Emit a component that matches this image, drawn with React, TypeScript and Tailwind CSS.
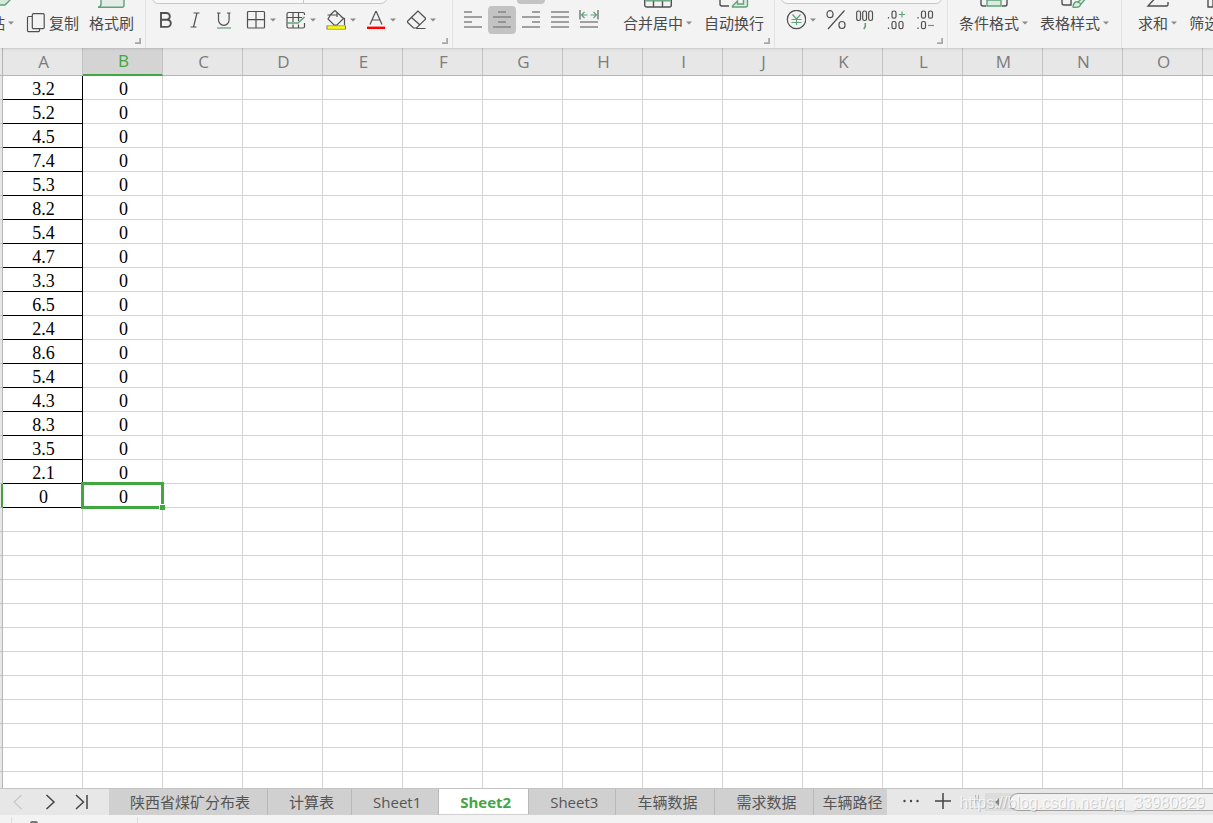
import { ReactNode } from 'react'
import clsx from 'clsx'

const COLUMNS = ['A', 'B', 'C', 'D', 'E', 'F', 'G', 'H', 'I', 'J', 'K', 'L', 'M', 'N', 'O', 'P']
const VALUES = [
  '3.2', '5.2', '4.5', '7.4', '5.3', '8.2', '5.4', '4.7', '3.3',
  '6.5', '2.4', '8.6', '5.4', '4.3', '8.3', '3.5', '2.1', '0',
]
const ROW_COUNT = 30
const ACTIVE_ROW = VALUES.length - 1

const SHEETS = ['陕西省煤矿分布表', '计算表', 'Sheet1', 'Sheet2', 'Sheet3', '车辆数据', '需求数据', '车辆路径']

const GREEN = '#5fa27a'
const DARK = '#505050'

function Arrow() {
  return (
    <svg className="w-1.5 h-1 shrink-0" viewBox="0 0 6 4" fill="#8a8a8a">
      <path d="M0 .5h6L3 3.5z" />
    </svg>
  )
}

function Icon({ children }: { children: ReactNode }) {
  return (
    <svg className="size-5 shrink-0" viewBox="0 0 20 20" fill="none" stroke={DARK} strokeWidth="1.2">
      {children}
    </svg>
  )
}

function Group({ children, className, launcher }: { children: ReactNode; className?: string; launcher?: boolean }) {
  return (
    <div className={clsx('relative flex shrink-0 items-end border-r border-[#e2e2e2] pb-3.5', className)}>
      {children}
      {launcher && (
        <svg className="absolute bottom-1 right-1 size-1.5" viewBox="0 0 6 6" fill="none" stroke="#a8a8a8" strokeWidth="1.8">
          <path d="M5.100 0v5.100H0" />
        </svg>
      )}
    </div>
  )
}

function BigButton({ label, icon, arrow }: { label: string; icon?: ReactNode; arrow?: boolean }) {
  return (
    <button className="flex shrink-0 flex-col items-center gap-1">
      <svg className="h-7 w-8" viewBox="0 0 32 28" fill="none" stroke={DARK} strokeWidth="1.4">
        {icon}
      </svg>
      <span className="flex h-[22px] items-center gap-[3px] whitespace-nowrap">
        {label}
        {arrow && <Arrow />}
      </span>
    </button>
  )
}

function Tool({ label, children, arrow }: { label: string; children: ReactNode; arrow?: boolean }) {
  return (
    <button aria-label={label} className="flex h-7 shrink-0 items-center gap-1">
      {children}
      {arrow && <Arrow />}
    </button>
  )
}

function SquareTool({ label, children, active }: { label: string; children: ReactNode; active?: boolean }) {
  return (
    <button
      aria-label={label}
      className={clsx('flex size-7 shrink-0 items-center justify-center rounded', active && 'bg-[#c3c3c3]')}
    >
      {children}
    </button>
  )
}

function AlignIcon({ d }: { d: string }) {
  return (
    <svg className="size-5" viewBox="0 0 20 20" fill="none" stroke="#858585" strokeWidth="1.5">
      <path d={d} />
    </svg>
  )
}

function Ribbon() {
  return (
    <header className="relative z-10 flex h-12 shrink-0 items-stretch overflow-hidden bg-[#f3f3f3] text-[15px] text-[#4a4a4a] shadow-sm">
      <Group launcher className="-ml-[25px] pr-[11px]">
        <BigButton label="粘贴" arrow icon={<path d="M17 25h9l5-5V6H17z" stroke={GREEN} fill="#d5e9dc" />} />
        <button className="ml-3 flex h-[22px] shrink-0 items-center gap-[3px] whitespace-nowrap">
          <Icon>
            <path d="M7.500 .700h9.500a1.200 1.200 0 0 1 1.200 1.200v12.600a1.200 1.200 0 0 1-1.200 1.200H7.500a1.200 1.200 0 0 1-1.200-1.200V1.900A1.200 1.200 0 0 1 7.500 .7z" />
            <path d="M6.300 3.500H2.700A1.200 1.200 0 0 0 1.500 4.700v12.800a1.200 1.200 0 0 0 1.200 1.200h9.600a1.200 1.200 0 0 0 1.200-1.200v-1.800" />
          </Icon>
          复制
        </button>
        <div className="ml-2.5">
          <BigButton label="格式刷" icon={<path d="M5 27.200h21a2 2 0 0 0 2-2V4H5v20q0 3-3 3.200z" stroke={GREEN} fill="#e3ece6" />} />
        </div>
      </Group>

      <Group launcher className="pl-1.5 pr-4">
        <div className="flex flex-col gap-0.5">
          <div className="flex h-8 w-[235px] shrink-0 rounded-md border border-[#c8c8c8] bg-[#f8f8f8]">
            <div className="w-[151px] border-r border-[#c8c8c8]" />
          </div>
          <div className="flex items-center gap-2">
            <div className="flex gap-px">
              <SquareTool label="加粗">
                <Icon>
                  <path d="M5 3h5.500a3.300 3.300 0 0 1 0 6.700H5zM5 9.700h6.200a3.600 3.600 0 0 1 0 7.200H5z" strokeWidth="1.900" />
                </Icon>
              </SquareTool>
              <SquareTool label="倾斜">
                <Icon>
                  <path d="M8.500 3h6M5.500 17h6M12 3L8.500 17" />
                </Icon>
              </SquareTool>
              <SquareTool label="下划线">
                <Icon>
                  <path d="M3 3h3.500M13 3h3.500M4.500 3v7a5.300 5.300 0 0 0 10.600 0V3" />
                  <path d="M3 18h14" stroke={GREEN} />
                </Icon>
              </SquareTool>
            </div>
            <div className="flex gap-2.5">
              <Tool label="边框" arrow>
                <Icon>
                  <rect x="1.500" y="1.500" width="17" height="16.500" rx="1" />
                  <path d="M10 1.500V18M1.500 9.700h17" />
                </Icon>
              </Tool>
              <Tool label="表格" arrow>
                <Icon>
                  <path d="M18.500 5V4a1.500 1.500 0 0 0-1.500-1.500H2.500A1.500 1.500 0 0 0 1 4v12.500A1.500 1.500 0 0 0 2.500 18H17a1.500 1.500 0 0 0 1.500-1.500V13M1 7.500h15M7 2.500V12M12.500 2.500V11M7 14.500V18M12.500 14.500V18" />
                  <path d="M1 13h11l6.500-6" stroke={GREEN} strokeWidth="1.600" />
                </Icon>
              </Tool>
              <Tool label="填充颜色" arrow>
                <Icon>
                  <path d="M1.500 5h9M4 5l5-4.500 8.500 8L11 15H8L2 9l2.500-4M11 2.500V7M14.500 6.500l4 2v6.500" />
                  <path d="M.500 17.500h19.500" stroke="#777" strokeWidth="4" />
                  <path d="M1.500 17.500h17.500" stroke="#ff0" strokeWidth="2.600" />
                </Icon>
              </Tool>
              <Tool label="字体颜色" arrow>
                <Icon>
                  <path d="M4 14.500L9.700 1.500h.6L16 14.500M6 10h8" />
                  <path d="M1 17.800h18" stroke="#f00" strokeWidth="2.400" />
                </Icon>
              </Tool>
              <Tool label="清除" arrow>
                <Icon>
                  <path d="M12 1L2 10.700a1.500 1.500 0 0 0 0 2.100L7.500 18h3L20 8.700zM5.500 7.500l8.500 7.500M10 18.500h9.500" />
                </Icon>
              </Tool>
            </div>
          </div>
        </div>
      </Group>

      <Group launcher className="pl-1.5 pr-2.5">
        <div className="flex flex-col gap-0.5">
          <div className="flex gap-px">
            <SquareTool label="顶端对齐">{null}</SquareTool>
            <SquareTool label="垂直居中">{null}</SquareTool>
            <SquareTool label="底端对齐" active>{null}</SquareTool>
          </div>
          <div className="flex gap-px">
            <SquareTool label="左对齐"><AlignIcon d="M1 2h8M1 7h18M1 12h8M1 17h18" /></SquareTool>
            <SquareTool label="水平居中" active><AlignIcon d="M6 2h8M1 7h18M6 12h8M1 17h18" /></SquareTool>
            <SquareTool label="右对齐"><AlignIcon d="M11 2h8M1 7h18M11 12h8M1 17h18" /></SquareTool>
            <SquareTool label="两端对齐"><AlignIcon d="M1 2h18M1 7h18M1 12h18M1 17h18" /></SquareTool>
            <SquareTool label="分散对齐">
              <svg className="size-5" viewBox="0 0 20 20" fill="none" stroke="#858585" strokeWidth="1.5">
                <path d="M1 12h18M1 17h18" />
                <path d="M1 0v9.500M19 0v9.500" stroke={DARK} strokeWidth="1.100" />
                <path d="M8.500 5h-6M5.500 2l-3 3 3 3M11.500 5h6M14.500 2l3 3-3 3" stroke={GREEN} strokeWidth="1.200" />
              </svg>
            </SquareTool>
          </div>
        </div>
        <div className="ml-5 flex gap-3">
          <BigButton
            label="合并居中"
            arrow
            icon={
              <>
                <path d="M2.700 6v19a2 2 0 0 0 2 2h22.600a2 2 0 0 0 2-2V6M11.500 21v6M20.500 21v6" />
                <path d="M3.500 20.800h25" stroke={GREEN} />
              </>
            }
          />
          <BigButton
            label="自动换行"
            icon={
              <>
                <path d="M2 4v20a2 2 0 0 0 2 2h7" />
                <path d="M14.500 26l5-5v3h6V14h4v11a2 2 0 0 1-2 2h-13z" stroke={GREEN} fill="#dcebe1" />
              </>
            }
          />
        </div>
      </Group>

      <Group launcher className="pl-1.5 pr-[5px]">
        <div className="flex flex-col gap-0.5">
          <div className="h-8 w-[161px] shrink-0 rounded-md border border-[#c8c8c8] bg-[#f8f8f8]" />
          <div className="flex gap-2.5 pl-[5px]">
            <Tool label="货币" arrow>
              <Icon>
                <circle cx="10.500" cy="9.500" r="9.200" />
                <path d="M6.500 4.500l4 4.500 4-4.500M5.500 9.500h10M5.500 12.500h10M10.500 9v6" stroke={GREEN} />
              </Icon>
            </Tool>
            <Tool label="百分比">
              <Icon>
                <rect x="1" y=".7" width="6" height="7" rx="3" />
                <rect x="13" y="11.500" width="6" height="7" rx="3" />
                <path d="M18.500 .5L2 19" />
              </Icon>
            </Tool>
            <Tool label="千位分隔">
              <Icon>
                <rect x=".7" y="1" width="3.800" height="9.500" rx="1.700" />
                <rect x="6.700" y="1" width="3.800" height="9.500" rx="1.700" />
                <rect x="12.700" y="1" width="3.800" height="9.500" rx="1.700" />
                <path d="M9.300 13v3.500l-1.500 2.500" stroke={GREEN} strokeWidth="1.600" />
              </Icon>
            </Tool>
            <Tool label="增加小数">
              <Icon>
                <path d="M2.500 7v1.500M2.500 17.500V19" />
                <rect x="6" y="1" width="4" height="7.200" rx="1.800" />
                <rect x="6" y="11.500" width="4" height="7.200" rx="1.800" />
                <rect x="13" y="11.500" width="4" height="7.200" rx="1.800" />
                <path d="M13 4.500h6M16 1.500v6" stroke={GREEN} />
              </Icon>
            </Tool>
            <Tool label="减少小数">
              <Icon>
                <path d="M2 7v1.500M2 17.500V19" />
                <rect x="5.500" y="1" width="4" height="7.200" rx="1.800" />
                <rect x="12.500" y="1" width="4" height="7.200" rx="1.800" />
                <rect x="5.500" y="11.500" width="4" height="7.200" rx="1.800" />
                <path d="M12 15.500h6" stroke={GREEN} />
              </Icon>
            </Tool>
          </div>
        </div>
      </Group>

      <Group className="gap-3 pl-[11px] pr-3">
        <BigButton
          label="条件格式"
          arrow
          icon={
            <>
              <path d="M8 8H3v16a2 2 0 0 0 2 2h3M24 8h5v16a2 2 0 0 1-2 2h-3" />
              <path d="M9 8h14v18H9zM9 20h14" stroke={GREEN} fill="#dcebe1" />
            </>
          }
        />
        <BigButton
          label="表格样式"
          arrow
          icon={
            <>
              <path d="M3 6v17a2 2 0 0 0 2 2h7V10" />
              <path d="M27 15l-8 7c-2-1-5 1-5 5 4 1 7 0 8-3l7-8M19 22l3 2" stroke={GREEN} fill="#dcebe1" />
            </>
          }
        />
      </Group>

      <div className="flex shrink-0 items-end gap-3 pb-3.5 pl-4">
        <BigButton label="求和" arrow icon={<path d="M26 4H6l10 11L6 26h18.500a1.500 1.500 0 0 0 1.500-1.500V22" />} />
        <BigButton label="筛选" arrow icon={<path d="M2 2h28L20 15v12h-5V15z" />} />
      </div>
    </header>
  )
}

function Sheet() {
  return (
    <main className="min-h-0 flex-1 overflow-hidden bg-white">
      <table className="w-[1283px] table-fixed border-separate border-spacing-0 text-center">
        <colgroup>
          <col className="w-[3px]" />
          {COLUMNS.map((c) => (
            <col key={c} className="w-20" />
          ))}
        </colgroup>
        <thead>
          <tr className="h-7 bg-[#e7e7e7] text-[17px] leading-6 text-[#7c7c7c]">
            <th className="border-b border-r border-[#b5b5b5] p-0" />
            {COLUMNS.map((c) => (
              <th
                key={c}
                className={clsx(
                  'py-0 pl-0.5 pr-0 font-normal',
                  c === 'B'
                    ? 'border-b-2 border-r border-b-[#42a642] border-r-[#c2c2c2] bg-[#d4d4d4] text-[#42a642]'
                    : 'border-b border-r border-b-[#b5b5b5] border-r-[#c2c2c2]',
                )}
              >
                {c}
              </th>
            ))}
          </tr>
        </thead>
        <tbody className="font-['Liberation_Serif','Noto_Sans_CJK_SC',serif] text-lg leading-5 text-black">
          {Array.from({ length: ROW_COUNT }, (_, row) => (
            <tr key={row} className="h-6">
              <td
                className={clsx(
                  'border-b border-b-[#c2c2c2] bg-[#e7e7e7] p-0',
                  row === ACTIVE_ROW ? 'border-r-2 border-r-[#42a642]' : 'border-r border-r-[#b5b5b5]',
                )}
              />
              {COLUMNS.map((c) => {
                const filled = row < VALUES.length
                const selected = c === 'B' && row === ACTIVE_ROW
                return (
                  <td
                    key={c}
                    className={clsx(
                      'border-b border-r pb-0 pl-0.5 pr-0 pt-0.5',
                      c === 'A' && filled ? 'border-black' : 'border-[#d4d4d4]',
                      selected && 'relative',
                    )}
                  >
                    {filled && c === 'A' && VALUES[row]}
                    {filled && c === 'B' && '0'}
                    {selected && (
                      <>
                        <span className="absolute -inset-0.5 border-[3px] border-[#42a642]" />
                        <span className="absolute -bottom-[3px] -right-[3px] size-1.5 border-l border-t border-white bg-[#42a642]" />
                      </>
                    )}
                  </td>
                )
              })}
            </tr>
          ))}
        </tbody>
      </table>
    </main>
  )
}

function SheetTabs() {
  return (
    <nav className="relative flex h-[27px] shrink-0 items-stretch overflow-hidden border-t border-[#c4c4c4] bg-[#e7e7e7] text-[15px] text-[#555]">
      <div className="flex w-[109px] shrink-0 items-center gap-4 pl-2.5">
        <button aria-label="上一个" className="text-[#c8c8c8]">
          <svg className="size-4" viewBox="0 0 16 16" fill="none" stroke="currentColor" strokeWidth="1.2">
            <path d="M11.500 1l-7.500 7 7.500 7" />
          </svg>
        </button>
        <button aria-label="下一个">
          <svg className="size-4" viewBox="0 0 16 16" fill="none" stroke="#444" strokeWidth="1.5">
            <path d="M4.500 1l7.500 7-7.500 7" />
          </svg>
        </button>
        <button aria-label="最后一个">
          <svg className="size-4" viewBox="0 0 16 16" fill="none" stroke="#444" strokeWidth="1.5">
            <path d="M2 1l7.500 7L2 15M13 1v14" />
          </svg>
        </button>
      </div>
      {SHEETS.map((name, i) => (
        <button
          key={name}
          className={clsx(
            'shrink-0 whitespace-nowrap leading-6',
            i === SHEETS.length - 1 ? 'pl-2 pr-[5px]' : 'border-r border-[#b9b9b9] pl-[21px] pr-[17px]',
            name === 'Sheet2' ? '-mt-px border-b border-b-[#d0d0d0] bg-white pt-px font-bold text-[#42a642]' : 'bg-[#d0d0d0]',
          )}
        >
          {name}
        </button>
      ))}
      <button aria-label="更多工作表" className="ml-4 shrink-0">
        <svg className="h-4 w-4" viewBox="0 0 16 16" fill="#444">
          <circle cx="1.500" cy="7" r="1.200" />
          <circle cx="8" cy="7" r="1.200" />
          <circle cx="14.500" cy="7" r="1.200" />
        </svg>
      </button>
      <button aria-label="新建工作表" className="ml-4 shrink-0 pb-0.5">
        <svg className="size-4" viewBox="0 0 16 16" fill="none" stroke="#444" strokeWidth="1.5">
          <path d="M8 0v16M0 8h16" />
        </svg>
      </button>
      <div className="ml-6 mt-1.5 h-2 w-1 shrink-0 self-start border-x border-[#b5b5b5]" />
      <div className="ml-1.5 mt-1 flex h-[18px] min-w-0 flex-1 items-center bg-[#dcdcdc]">
        <svg className="ml-2 mr-2 h-2 w-2 shrink-0" viewBox="0 0 8 8" fill="#888">
          <path d="M6 0v8L2 4z" />
        </svg>
        <div className="h-full flex-1 rounded-l-full border border-r-0 border-[#a0a0a0] bg-[#f1f1f1]" />
      </div>
      <p className="absolute right-2 top-0.5 whitespace-nowrap font-['Liberation_Sans',sans-serif] text-base leading-6 text-white/70 [text-shadow:1px_1px_0_#0000002e]">
        https://blog.csdn.net/qq_33980829
      </p>
    </nav>
  )
}

export default function App() {
  return (
    <div className="flex h-screen flex-col overflow-hidden bg-[#f3f3f3] font-['Open_Sans','Noto_Sans_CJK_SC',sans-serif]">
      <Ribbon />
      <Sheet />
      <SheetTabs />
      <footer className="flex h-2 shrink-0 items-end overflow-hidden bg-[#f3f3f3] pl-[11px]">
        <div className="flex h-1.5 w-[127px] items-end border-x border-[#dcdcdc] pl-[18px]">
          <div className="h-0.5 w-2 rounded-t-full bg-[#777]" />
        </div>
      </footer>
    </div>
  )
}
